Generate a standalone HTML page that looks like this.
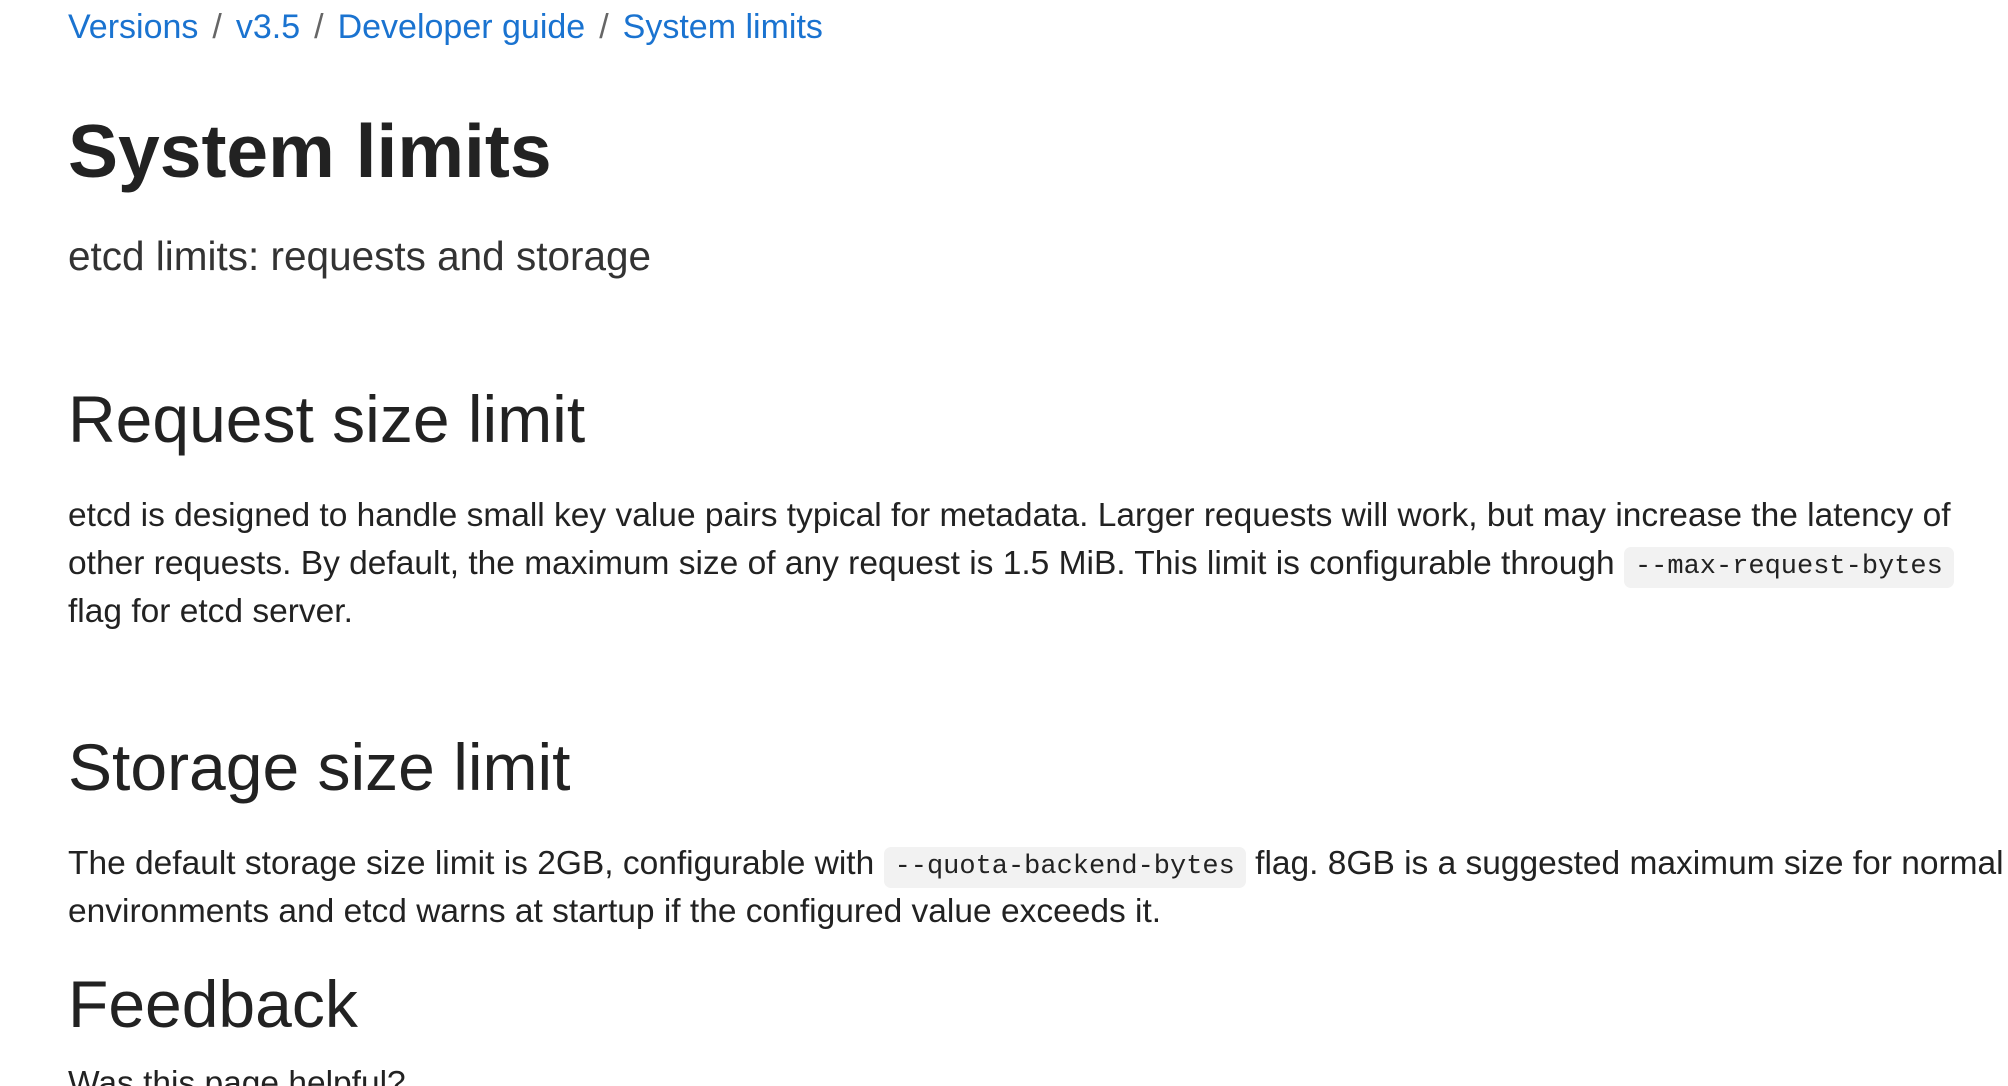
<!DOCTYPE html>
<html><head><meta charset="utf-8"><style>
html,body{margin:0;padding:0;background:#fff;width:2008px;height:1086px;overflow:hidden;position:relative;font-family:"Liberation Sans",sans-serif;color:#222}
.a{position:absolute;left:68px;white-space:nowrap}
.bc{top:7px;font-size:34px;line-height:40px;color:#1a73d0}
.bc .s{color:#666;margin:0 14px}
.t{top:106px;font-size:75px;line-height:90px;font-weight:bold;color:#222}
.sub{top:233px;font-size:40.5px;line-height:46px;color:#333}
.h2{font-size:66px;line-height:76px;color:#222}
.p{font-size:33.5px;line-height:48px;color:#222}
code{font-family:"Liberation Mono",monospace;font-size:27px;line-height:1;background:#f2f2f2;border-radius:7px;padding:7px 11px;display:inline-block;vertical-align:1px}
</style></head><body>
<div class="a bc">Versions<span class="s">/</span>v3.5<span class="s">/</span>Developer guide<span class="s">/</span>System limits</div>
<div class="a t">System limits</div>
<div class="a sub">etcd limits: requests and storage</div>
<div class="a h2" style="top:381px">Request size limit</div>
<div class="a p" style="top:492px">etcd is designed to handle small key value pairs typical for metadata. Larger requests will work, but may increase the latency of<br>other requests. By default, the maximum size of any request is 1.5 MiB. This limit is configurable through <code>--max-request-bytes</code><br>flag for etcd server.</div>
<div class="a h2" style="top:729px">Storage size limit</div>
<div class="a p" style="top:840px">The default storage size limit is 2GB, configurable with <code>--quota-backend-bytes</code> flag. 8GB is a suggested maximum size for normal<br>environments and etcd warns at startup if the configured value exceeds it.</div>
<div class="a h2" style="top:966px">Feedback</div>
<div class="a p" style="top:1060px">Was this page helpful?</div>
</body></html>
